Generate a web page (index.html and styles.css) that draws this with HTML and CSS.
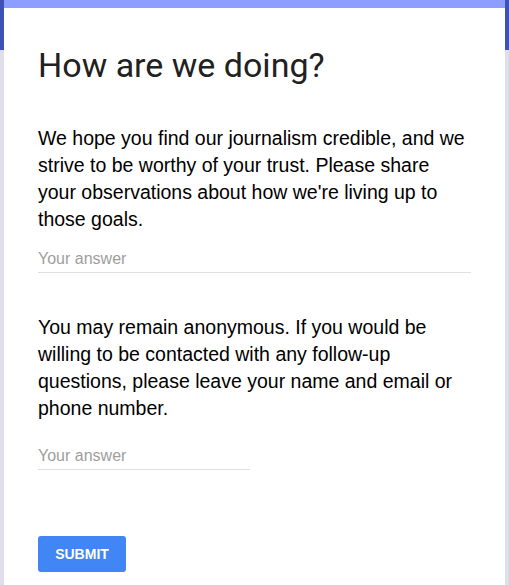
FILE: index.html
```html
<!DOCTYPE html>
<html lang="en">
<head>
    <meta charset="UTF-8">
    <meta name="viewport" content="width=device-width, initial-scale=1.0">
    <title>How are we doing?</title>
    <link rel="stylesheet" href="styles.css">
</head>
<body>
    <div class="page">
        <form class="card" onsubmit="return false;">
            <h1 class="title">How are we doing?</h1>

            <div class="question">
                <p class="question-text">We hope you find our journalism credible, and we strive to be worthy of your trust. Please share your observations about how we're living up to those goals.</p>
                <input class="answer answer-long" type="text" placeholder="Your answer">
            </div>

            <div class="question question-contact">
                <p class="question-text">You may remain anonymous. If you would be willing to be contacted with any follow-up questions, please leave your name and email or phone number.</p>
                <input class="answer answer-short" type="text" placeholder="Your answer">
            </div>

            <button class="submit-btn" type="submit">SUBMIT</button>
        </form>
    </div>
</body>
</html>
```

FILE: styles.css
```css
html, body {
    margin: 0;
    padding: 0;
}
body {
    background: linear-gradient(to bottom, #3f51b5 0, #3f51b5 50px, #dedeec 50px);
    min-height: 585px;
    font-family: 'Liberation Sans', Arial, sans-serif;
    color: #000000;
}
.page {
    padding: 0 4px;
}
.card {
    background: #ffffff;
    border-top: 8px solid #8c9eff;
    padding: 36px 34px 14px 34px;
    min-height: 600px;
    box-sizing: border-box;
}
.title {
    font-family: 'Roboto', sans-serif;
    font-weight: 400;
    font-size: 34px;
    line-height: 42px;
    color: #212121;
    margin: 0 0 39px 0;
}
.question {
    margin-bottom: 41px;
}
.question-text {
    font-size: 19.5px;
    line-height: 27px;
    margin: 0 0 16px 0;
}
.question-contact .question-text {
    margin-bottom: 24px;
}
.answer {
    display: block;
    border: none;
    border-bottom: 1px solid #e0e0e0;
    padding: 0 0 4px 0;
    font-family: 'Liberation Sans', Arial, sans-serif;
    font-size: 16px;
    line-height: 19px;
    outline: none;
    background: transparent;
}
.answer::placeholder {
    color: #9e9e9e;
}
.answer-long {
    width: 433px;
}
.answer-short {
    width: 212px;
}
.submit-btn {
    display: block;
    margin-top: 66px;
    width: 88px;
    height: 36px;
    background: #4285f4;
    color: #ffffff;
    border: none;
    border-radius: 3px;
    font-family: 'Liberation Sans', Arial, sans-serif;
    font-weight: 700;
    font-size: 14px;
    cursor: pointer;
}
```
